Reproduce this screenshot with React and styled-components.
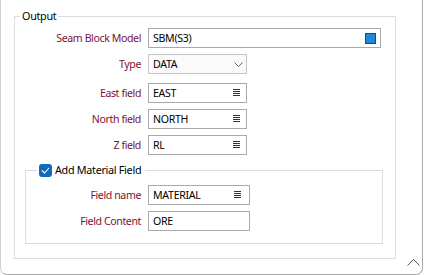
import React from 'react'
import styled, { createGlobalStyle } from 'styled-components'

const Global = createGlobalStyle`
  body{
    margin:0;
    background:#fff;
    font-family:"Noto Sans", sans-serif;
  }
`

const Panel = styled.div`
  box-sizing:border-box;
  width:423px;
  height:275px;
  border:1px solid #a9a9a9;
  border-top:none;
  border-left-color:#d2d2d2;
  border-radius:0 0 7px 7px;
  padding:0 2px 0 13px;
  display:flex;
  flex-direction:column;
`

const Group = styled.fieldset`
  box-sizing:border-box;
  width:${p => p.$w}px;
  min-width:0;
  margin:${p => p.$m};
  padding:${p => p.$pad};
  border:1px solid #dcdcdc;
  display:flex;
  flex-direction:column;
  gap:6px;
`

const Legend = styled.legend`
  margin-left:${p => p.$ml}px;
  padding:${p => p.$pad};
  font-size:10.8px;
  letter-spacing:-0.3px;
  line-height:16px;
  color:#000;
  display:flex;
  align-items:center;
  gap:3px;
`

const Check = styled.span`
  width:13px;
  height:13px;
  border-radius:3px;
  background:#0f6cbd;
  display:flex;
  align-items:center;
  justify-content:center;
`

const Row = styled.div`
  display:flex;
  align-items:center;
  gap:7px;
  margin-bottom:${p => p.$mb || 0}px;
`

const Label = styled.label`
  width:${p => p.$w}px;
  flex-shrink:0;
  text-align:right;
  font-size:10.6px;
  letter-spacing:-0.4px;
  color:#7a1238;
`

const Field = styled.div`
  box-sizing:border-box;
  width:${p => p.$w}px;
  height:20px;
  border:1px solid ${p => (p.$select ? '#c6c6c6' : '#a9a9a9')};
  background:${p => (p.$select ? '#fafafa' : '#fff')};
  display:flex;
  align-items:center;
  justify-content:space-between;
  padding:0 ${p => p.$pr || 6}px 0 4px;
  font-size:10.6px;
  letter-spacing:-0.3px;
  color:#000;
`

const Swatch = styled.span`
  width:11px;
  height:11px;
  box-sizing:border-box;
  background:#1d88d6;
  border:1px solid #23486a;
`

const Footer = styled.div`
  display:flex;
  justify-content:flex-end;
`

const ListIcon = () => (
  <svg width="7" height="8" viewBox="0 0 7 8">
    <g stroke="#333" strokeWidth="1">
      <line x1="0" y1="0.5" x2="7" y2="0.5" />
      <line x1="0" y1="2.5" x2="7" y2="2.5" />
      <line x1="0" y1="4.5" x2="7" y2="4.5" />
      <line x1="0" y1="6.5" x2="7" y2="6.5" />
    </g>
  </svg>
)

const Chevron = () => (
  <svg width="9" height="5" viewBox="0 0 9 5">
    <polyline points="0.5,0.5 4.5,4.5 8.5,0.5" fill="none" stroke="#666" strokeWidth="1" />
  </svg>
)

const fields = [
  { label: 'East field', value: 'EAST' },
  { label: 'North field', value: 'NORTH' },
  { label: 'Z field', value: 'RL' },
]

export default function App() {
  return (
    <>
      <Global />
      <Panel>
        <Group $w={382} $m="8px 0 0 0" $pad="4px 0 14px 0">
          <Legend $ml={5} $pad="0 2px">Output</Legend>
          <Row>
            <Label $w={126}>Seam Block Model</Label>
            <Field $w={233} $pr={4}>
              SBM(S3)
              <Swatch />
            </Field>
          </Row>
          <Row $mb={3}>
            <Label $w={126}>Type</Label>
            <Field $w={99} $select $pr={3}>
              DATA
              <Chevron />
            </Field>
          </Row>
          {fields.map(f => (
            <Row key={f.label}>
              <Label $w={126}>{f.label}</Label>
              <Field $w={99}>
                {f.value}
                <ListIcon />
              </Field>
            </Row>
          ))}
          <Group $w={358} $m="1px 0 0 10px" $pad="7px 0 12px 0">
            <Legend $ml={11} $pad="0 4px 0 2px">
              <Check>
                <svg width="9" height="7" viewBox="0 0 9 7">
                  <polyline points="1,3.5 3.5,6 8,1" fill="none" stroke="#fff" strokeWidth="1.1" />
                </svg>
              </Check>
              Add Material Field
            </Legend>
            <Row>
              <Label $w={115}>Field name</Label>
              <Field $w={102} $pr={8}>
                MATERIAL
                <ListIcon />
              </Field>
            </Row>
            <Row>
              <Label $w={115}>Field Content</Label>
              <Field $w={102}>ORE</Field>
            </Row>
          </Group>
        </Group>
        <Footer>
          <svg width="13" height="7" viewBox="0 0 13 7">
            <polyline points="0.5,6.5 6.5,0.5 12.5,6.5" fill="none" stroke="#555" strokeWidth="1" />
          </svg>
        </Footer>
      </Panel>
    </>
  )
}
